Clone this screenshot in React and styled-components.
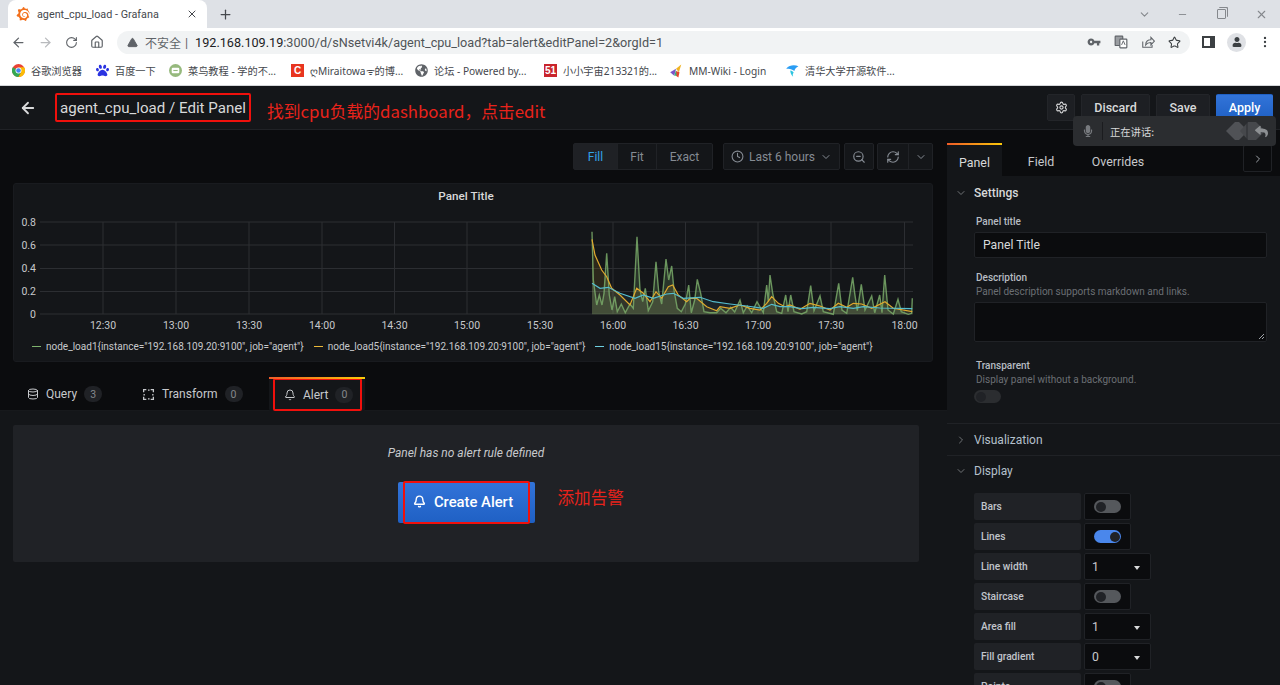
import React from "react"
import styled, {createGlobalStyle} from "styled-components"
import {ArrowLeft, ArrowRight, RotateCw, Home, Star, MoreVertical, Plus, X, Minus, ChevronDown, ChevronRight, Settings, Clock, ZoomOut, RefreshCw, Database, Bell, TriangleAlert} from "lucide-react"
import {FaUser, FaMicrophone, FaReply, FaPaw, FaGlobeAmericas} from "react-icons/fa"
import {MdVpnKey} from "react-icons/md"
import {SiGrafana} from "react-icons/si"

const ROBOTO = `Roboto, "Noto Sans CJK SC", sans-serif`
const CJK = `"Noto Sans CJK SC", Roboto, sans-serif`

const GlobalStyle = createGlobalStyle`
    html, body {
        margin: 0;
        padding: 0;
        background: #141619;
        overflow: hidden;
    }
    * { box-sizing: border-box; }
`

const Page = styled.div`
    width: 1280px;
    height: 685px;
    position: relative;
    overflow: hidden;
    display: flex;
    flex-direction: column;
    font-family: ${ROBOTO};
`

/* browser chrome */
const TabStrip = styled.div`
    height: 28px;
    background: #dee1e6;
    display: flex;
    align-items: flex-end;
    padding-left: 8px;
    flex: none;
`
const BrowserTab = styled.div`
    width: 199px;
    height: 28px;
    background: #fff;
    border-radius: 8px 8px 0 0;
    display: flex;
    align-items: center;
    padding: 0 9px 0 8px;
    color: #45484d;
    font-size: 10.8px;
    svg:first-child { color: #f2701d; margin-right: 7px; }
    span { flex: 1; }
`
const NewTab = styled.div`
    width: 36px;
    height: 28px;
    display: flex;
    align-items: center;
    justify-content: center;
    color: #45484d;
`
const WindowControls = styled.div`
    margin-left: auto;
    height: 28px;
    display: flex;
    align-items: center;
    gap: 29px;
    padding-right: 12px;
    color: #85888d;
    svg:first-child { margin-right: -3px; }
`
const RestoreIcon = styled.div`
    width: 9px;
    height: 10px;
    border: 1px solid #85888d;
    border-radius: 1px;
    box-shadow: 1px -1px 0 0 #dee1e6, 2px -2px 0 0 #85888d;
`
const NavBar = styled.div`
    height: 28px;
    background: #fff;
    display: flex;
    align-items: center;
    padding-left: 11px;
    flex: none;
    color: #5f6368;
`
const NavButtons = styled.div`
    display: flex;
    align-items: center;
    gap: 12px;
    width: 106px;
    flex: none;
`
const Omnibox = styled.div`
    width: 1073px;
    height: 23px;
    border-radius: 12px;
    background: #f1f3f4;
    display: flex;
    align-items: center;
    padding: 0 9px 0 10px;
    font-size: 12.65px;
    color: #5f6368;
`
const Insecure = styled.span`
    font-family: ${CJK};
    font-size: 12px;
    color: #5f6368;
    margin-left: 7px;
    padding-right: 4px;
`
const Divider = styled.span`
    color: #5f6368;
    margin-right: 7px;
`
const UrlHost = styled.span`
    color: #202124;
`
const UrlPath = styled.span`
    color: #4f5357;
`
const OmniIcons = styled.div`
    margin-left: auto;
    display: flex;
    align-items: center;
    gap: 13px;
    color: #5f6368;
`
const NavTail = styled.div`
    flex: 1;
    display: flex;
    align-items: center;
    gap: 12px;
    padding-left: 12px;
    color: #3c4043;
`
const SidePanelIcon = styled.div`
    width: 13px;
    height: 12px;
    border: 2px solid #3c4043;
    border-right-width: 5px;
    flex: none;
`
const Avatar = styled.div`
    width: 19px;
    height: 19px;
    border-radius: 50%;
    background: #dfe1e5;
    color: #3c4043;
    display: flex;
    align-items: center;
    justify-content: center;
    flex: none;
`
const BookmarkBar = styled.div`
    height: 30px;
    background: #fff;
    display: flex;
    align-items: center;
    padding-left: 12px;
    gap: 13px;
    flex: none;
    border-bottom: 1px solid #d4d6d9;
`
const Bookmark = styled.div`
    display: flex;
    align-items: center;
    gap: 6px;
    font-size: 10.2px;
    color: #45484d;
    white-space: nowrap;
    font-family: "Noto Sans", "Noto Sans CJK SC", sans-serif;
    width: ${({$w}) => $w}px;
    flex: none;
    svg { flex: none; }
`
const SquareBadge = styled.div`
    width: 13px;
    height: 13px;
    background: ${({$bg}) => $bg};
    color: #fff;
    font: bold 10px "Liberation Sans", sans-serif;
    display: flex;
    align-items: center;
    justify-content: center;
    flex: none;
`

/* grafana top bar */
const TopBar = styled.div`
    height: 44px;
    background: #141619;
    border-bottom: 1px solid #202226;
    display: flex;
    align-items: center;
    flex: none;
    padding-left: 19px;
    color: #d8d9da;
`
const TitleBox = styled.div`
    margin-left: 18px;
    height: 29px;
    width: 196px;
    border: 2px solid #f0100c;
    border-radius: 2px;
    font-size: 15.1px;
    color: #d8d9da;
    display: flex;
    align-items: center;
    padding-left: 3px;
    white-space: nowrap;
`
const Note = styled.span`
    color: #e8231b;
    font-family: ${CJK};
    font-size: ${({$size}) => $size}px;
    white-space: nowrap;
`
const TitleNote = styled(Note)`
    margin: 7px 0 0 16px;
`
const TopActions = styled.div`
    margin-left: auto;
    display: flex;
    gap: 6px;
    padding-right: 7px;
    align-items: center;
`
const TopButton = styled.div`
    height: 27px;
    width: ${({$w}) => $w}px;
    border-radius: 2px;
    background: ${({$primary}) => $primary ? "linear-gradient(#3274d9, #1f60c4)" : "#1d1f23"};
    color: ${({$primary}) => $primary ? "#fff" : "#d8d9da"};
    border: 1px solid ${({$primary}) => $primary ? "transparent" : "#232529"};
    display: flex;
    align-items: center;
    justify-content: center;
    font-size: 12.5px;
    font-weight: 500;
`

/* floating speech hint over the header */
const SpeechHint = styled.div`
    position: absolute;
    left: 1073px;
    top: 116px;
    width: 203px;
    height: 30px;
    border-radius: 4px;
    background: #2b2d30;
    display: flex;
    align-items: center;
    color: #d8d9da;
    font-family: ${CJK};
    font-size: 10.3px;
`
const HintMic = styled.div`
    width: 30px;
    height: 18px;
    border-right: 1px solid #1b1c1f;
    display: flex;
    align-items: center;
    justify-content: center;
    color: #777a7e;
    margin-right: 7px;
`
const HintTail = styled.div`
    margin-left: auto;
    position: relative;
    display: flex;
    align-items: center;
    padding-right: 8px;
    color: #8d9093;
    svg:last-child { margin-left: -11px; }
`

/* main split */
const Workspace = styled.div`
    flex: 1;
    display: flex;
    min-height: 0;
`
const EditorColumn = styled.div`
    width: 947px;
    flex: none;
    display: flex;
    flex-direction: column;
    background: #0b0c0e;
`
const Toolbar = styled.div`
    height: 53px;
    padding: 13px 14px 0 0;
    display: flex;
    justify-content: flex-end;
    flex: none;
    gap: 3px;
    color: #9fa3a8;
`
const ButtonGroup = styled.div`
    height: 27px;
    display: flex;
    border: 1px solid #202226;
    border-radius: 2px;
    background: #141619;
    margin-right: ${({$gap}) => $gap || 0}px;
`
const ToolCell = styled.div`
    width: ${({$w}) => $w}px;
    display: flex;
    align-items: center;
    justify-content: center;
    gap: 5px;
    font-size: 12px;
    color: ${({$active}) => $active ? "#33a2e5" : "#858b93"};
    background: ${({$active}) => $active ? "#1f2125" : "transparent"};
    & + & { border-left: 1px solid #202226; }
`
const PanelCard = styled.div`
    margin: 0 14px 0 13px;
    height: 179px;
    background: #141619;
    border: 1px solid #191b1f;
    border-radius: 3px;
    flex: none;
    display: flex;
    flex-direction: column;
`
const PanelHeading = styled.div`
    height: 24px;
    display: flex;
    align-items: center;
    justify-content: center;
    font-size: 11.7px;
    font-weight: 500;
    color: #d8d9da;
    flex: none;
    padding: 0 14px 0 0;
`
const ChartSvg = styled.svg`
    display: block;
    flex: none;
    margin-left: -1px;
    text {
        font-family: ${ROBOTO};
        font-size: 10.5px;
        fill: #c7c9cc;
    }
`
const Legend = styled.div`
    display: flex;
    gap: 10px;
    padding: 5px 0 0 18px;
    font-size: 10px;
    color: #c7c9cc;
    white-space: nowrap;
`
const LegendItem = styled.div`
    display: flex;
    align-items: center;
    gap: 5px;
    &::before {
        content: "";
        width: 9px;
        height: 1.5px;
        background: ${({$color}) => $color};
    }
`
const QueryTabs = styled.div`
    margin-top: 15px;
    height: 34px;
    display: flex;
    padding-left: 27px;
    flex: none;
    border-bottom: 1px solid #17191c;
`
const QueryTab = styled.div`
    height: 34px;
    display: flex;
    align-items: center;
    gap: 7px;
    color: #c7c9cc;
    font-size: 12px;
    width: ${({$w}) => $w}px;
    flex: none;
`
const AlertTab = styled(QueryTab)`
    position: relative;
    background: #141619;
    border: 2px solid #f0100c;
    border-radius: 2px;
    padding-left: 9px;
    margin: 1px 0 0 1px;
    height: 33px;
    box-shadow: -4px 0 0 #141619, 3px 0 0 #141619;
    &::before {
        content: "";
        position: absolute;
        left: -6px;
        right: -5px;
        top: -3px;
        height: 2px;
        background: linear-gradient(90deg, #f05a28, #fbca0a);
    }
`
const Count = styled.span`
    min-width: 18px;
    height: 16px;
    border-radius: 8px;
    background: #202226;
    color: #85888c;
    font-size: 10.5px;
    display: flex;
    align-items: center;
    justify-content: center;
`
const AlertArea = styled.div`
    flex: 1;
    background: #141619;
    padding: 14px 28px 0 13px;
`
const EmptyPanel = styled.div`
    height: 137px;
    background: #202226;
    border-radius: 2px;
    display: flex;
    flex-direction: column;
    align-items: center;
    padding-top: 21px;
`
const EmptyText = styled.div`
    font-size: 12px;
    font-style: italic;
    color: #c7c9cc;
`
const CreateRow = styled.div`
    margin-top: 22px;
    position: relative;
    width: 137px;
`
const CreateButton = styled.div`
    height: 41px;
    border-radius: 2px;
    background: linear-gradient(#3274d9, #1f60c4);
    color: #fff;
    font-size: 14.8px;
    font-weight: 500;
    display: flex;
    align-items: center;
    justify-content: center;
    gap: 8px;
    padding: 0 6px 2px 0;
`
const RedFrame = styled.div`
    position: absolute;
    left: 5px;
    right: 5px;
    top: -1px;
    bottom: -1px;
    border: 2px solid #f0100c;
    border-radius: 2px;
`
const CreateNote = styled(Note)`
    position: absolute;
    left: 160px;
    top: 3px;
    line-height: 24px;
`

/* options pane */
const OptionsColumn = styled.div`
    flex: 1;
    min-width: 0;
    display: flex;
    flex-direction: column;
    background: linear-gradient(#0b0c0e 46px, #141619 46px);
`
const PaneTabs = styled.div`
    height: 46px;
    padding-top: 13px;
    display: flex;
    flex: none;
    border-bottom: 1px solid #0b0c0e;
    position: relative;
`
const PaneTab = styled.div`
    width: ${({$w}) => $w}px;
    display: flex;
    align-items: center;
    justify-content: center;
    font-size: 12.4px;
    color: #c7c9cc;
    padding-top: 3px;
    height: 33px;
    flex: none;
`
const ActivePaneTab = styled(PaneTab)`
    color: #d8d9da;
    background: #141619;
    border-top: 2px solid;
    border-image: linear-gradient(90deg, #f05a28, #fbca0a) 1;
`
const CollapseButton = styled.div`
    margin: 2px 8px 0 auto;
    width: 29px;
    height: 27px;
    border: 1px solid #202226;
    border-radius: 2px;
    display: flex;
    align-items: center;
    justify-content: center;
    color: #9fa3a8;
`
const Section = styled.div`
    border-bottom: 1px solid ${({$last}) => $last ? "transparent" : "#202226"};
    flex: none;
`
const SectionHead = styled.div`
    height: ${({$h}) => $h}px;
    display: flex;
    align-items: center;
    padding-left: 8px;
    gap: 7px;
    color: ${({$muted}) => $muted ? "#b4c0cc" : "#d8d9da"};
    font-size: 12px;
    font-weight: ${({$muted}) => $muted ? 400 : 500};
    svg { color: #6f7275; }
`
const SectionBody = styled.div`
    padding: ${({$pad}) => $pad};
`
const FieldLabel = styled.div`
    font-size: 10px;
    font-weight: 500;
    color: #b7bcc2;
    line-height: 14px;
    padding-left: 2px;
`
const FieldHint = styled.div`
    font-size: 10px;
    color: #6b6f74;
    line-height: 14px;
    padding-left: 2px;
`
const TextInput = styled.div`
    height: 26px;
    margin: 3px 0 13px;
    background: #0b0c0e;
    border: 1px solid #202226;
    border-radius: 2px;
    font-size: 12.2px;
    color: #d8d9da;
    display: flex;
    align-items: center;
    padding-left: 8px;
`
const TextArea = styled.div`
    height: 40px;
    margin: 3px 0 17px;
    background: #0b0c0e;
    border: 1px solid #202226;
    border-radius: 2px;
    position: relative;
    svg { position: absolute; right: 1px; bottom: 1px; }
`
const Toggle = styled.div`
    width: 27px;
    height: 13px;
    border-radius: 7px;
    background: ${({$on, $dim}) => $on ? "#4a87ec" : $dim ? "#2b2d30" : "#55585c"};
    position: relative;
    flex: none;
    &::after {
        content: "";
        position: absolute;
        top: 1.5px;
        left: ${({$on}) => $on ? "15.5px" : "1.5px"};
        width: 10px;
        height: 10px;
        border-radius: 50%;
        background: #202226;
    }
`
const TransparentToggle = styled.div`
    margin: 3px 0 20px;
`
const OptionRow = styled.div`
    display: flex;
    gap: 3px;
    height: 27px;
    margin-bottom: 3px;
`
const OptionLabel = styled.div`
    width: 107px;
    flex: none;
    background: #202226;
    border-radius: 2px;
    font-size: 10.2px;
    font-weight: 500;
    color: #c0c5cb;
    display: flex;
    align-items: center;
    padding-left: 7px;
`
const OptionBox = styled.div`
    width: ${({$wide}) => $wide ? 67 : 47}px;
    flex: none;
    background: #0b0c0e;
    border: 1px solid #202226;
    border-radius: 2px;
    display: flex;
    align-items: center;
    font-size: 12.2px;
    color: #c7c9cc;
    padding: ${({$wide}) => $wide ? "0 10px 0 7px" : "0 0 0 9px"};
    justify-content: space-between;
`
const Caret = styled.span`
    width: 0;
    height: 0;
    border-left: 3.5px solid transparent;
    border-right: 3.5px solid transparent;
    border-top: 4px solid #d8d9da;
    margin-top: 2px;
`

const toPts = (arr) => arr.map(([x, y]) => `${(480 + x / 3).toFixed(1)},${(180 + y / 3).toFixed(1)}`).join(" ")

const GREEN = [[336,155],[340,300],[350,375],[358,345],[366,375],[372,340],[380,220],[388,345],[396,390],[404,350],[412,395],[424,372],[436,398],[450,372],[460,385],[471,170],[480,330],[488,365],[496,325],[505,392],[518,365],[528,245],[536,335],[545,372],[558,237],[566,300],[575,258],[582,330],[592,385],[604,395],[616,372],[626,315],[634,398],[644,360],[652,298],[662,340],[672,395],[690,398],[710,398],[722,385],[738,398],[752,382],[764,396],[780,360],[790,398],[802,378],[815,398],[831,365],[850,398],[860,315],[865,365],[870,285],[878,340],[890,395],[905,400],[917,345],[924,395],[932,345],[942,395],[965,402],[980,395],[992,317],[1002,392],[1020,348],[1030,395],[1060,403],[1076,310],[1086,390],[1100,400],[1118,292],[1124,340],[1132,392],[1144,313],[1155,390],[1175,348],[1184,398],[1199,345],[1206,398],[1214,285],[1224,390],[1240,402],[1254,358],[1264,395],[1285,403],[1295,400],[1297,355]]
const YELLOW = [[336,178],[345,225],[365,270],[380,290],[395,325],[420,345],[450,375],[470,325],[490,340],[510,365],[528,335],[545,355],[565,320],[578,315],[595,345],[620,365],[630,355],[650,355],[680,380],[710,392],[720,380],[750,385],[780,375],[810,385],[840,390],[860,370],[875,350],[895,370],[915,380],[930,375],[960,388],[990,370],[1020,378],[1050,390],[1075,370],[1100,382],[1120,370],[1145,372],[1175,385],[1215,365],[1240,385],[1297,395]]
const BLUE = [[336,310],[360,325],[385,322],[420,340],[465,355],[490,345],[520,355],[560,342],[580,340],[610,355],[660,352],[700,365],[750,372],[800,378],[850,385],[875,373],[900,380],[930,380],[965,386],[1000,382],[1050,386],[1080,380],[1120,385],[1150,380],[1200,384],[1297,386]]

const Y_AXIS = [["0.8", 222], ["0.6", 245], ["0.4", 268.5], ["0.2", 291.5], ["0", 314]]
const X_AXIS = [["12:30", 103], ["13:00", 176], ["13:30", 249], ["14:00", 322], ["14:30", 394.5], ["15:00", 467], ["15:30", 540], ["16:00", 613], ["16:30", 685.5], ["17:00", 758], ["17:30", 831], ["18:00", 904.5]]

const LoadChart = () => {
    const base = [[1297, 403], [336, 403]]
    return (
        <ChartSvg width="920" height="128" viewBox="13 208 920 128">
            {Y_AXIS.map(([label, y]) => (
                <g key={label}>
                    <line x1="40" x2="913" y1={y} y2={y} stroke="#2c2e32"/>
                    <text x="36" y={y + 3.5} textAnchor="end">{label}</text>
                </g>
            ))}
            {X_AXIS.map(([label, x]) => (
                <g key={label}>
                    <line x1={x} x2={x} y1="222" y2="314" stroke="#2c2e32"/>
                    <text x={x} y="329" textAnchor="middle">{label}</text>
                </g>
            ))}
            <polygon points={toPts([...GREEN, ...base])} fill="#7eb26d" fillOpacity=".2"/>
            <polygon points={toPts([...YELLOW, ...base])} fill="#e0a92e" fillOpacity=".12"/>
            <polygon points={toPts([...BLUE, ...base])} fill="#6ed0e0" fillOpacity=".08"/>
            <polyline points={toPts(GREEN)} fill="none" stroke="#7eb26d" strokeWidth="1.4" strokeOpacity=".8"/>
            <polyline points={toPts(YELLOW)} fill="none" stroke="#e0a92e" strokeWidth="1.2"/>
            <polyline points={toPts(BLUE)} fill="none" stroke="#55bccd" strokeWidth="1.2"/>
        </ChartSvg>
    )
}

const ChromeLogo = () => (
    <svg width="13" height="13" viewBox="0 0 24 24">
        <circle cx="12" cy="12" r="12" fill="#ea4335"/>
        <path d="M12 12 1.6 6A12 12 0 0 0 12 24l5-9z" fill="#34a853"/>
        <path d="M12 6h10.4A12 12 0 0 1 12 24l5-9z" fill="#fbbc05"/>
        <circle cx="12" cy="12" r="5.5" fill="#fff"/>
        <circle cx="12" cy="12" r="4.2" fill="#4285f4"/>
    </svg>
)

const RunoobLogo = () => (
    <svg width="13" height="13" viewBox="0 0 24 24">
        <circle cx="12" cy="12" r="12" fill="#96b97d"/>
        <rect x="5" y="7" width="14" height="10" rx="2" fill="#fff"/>
        <rect x="8" y="11" width="8" height="2" fill="#96b97d"/>
    </svg>
)

const WikiLogo = () => (
    <svg width="14" height="14" viewBox="0 0 24 24">
        <path d="M2 14 12 8 9 20z" fill="#7b54c9"/>
        <path d="M12 8 21 1 17 14z" fill="#f0b323"/>
        <path d="M12 12 18 14 16 23 12 20z" fill="#e8452c"/>
        <path d="M9 20 12 10 13 20z" fill="#37b37e"/>
    </svg>
)

const TsinghuaLogo = () => (
    <svg width="14" height="14" viewBox="0 0 24 24">
        <path d="M2 8C8 1 17 1 23 4 19 6 17 9 16 12 13 9 8 8 2 8z" fill="#2a9df4"/>
        <path d="M9 11c3 0 5 2 6 4-2 1-2 4-1 7-3-3-5-7-5-11z" fill="#2ec5e0"/>
    </svg>
)

const TransformIcon = () => (
    <svg width="13" height="13" viewBox="0 0 24 24" fill="none" stroke="#c7c9cc" strokeWidth="2.4">
        <path d="M3 8V3h5M16 3h5v5M21 16v5h-5M8 21H3v-5"/>
        <path d="M11 4h3M20 11v3M4 11v3M11 20h3"/>
    </svg>
)

const TranslateIcon = () => (
    <svg width="14" height="14" viewBox="0 0 24 24" fill="none" stroke="#5f6368" strokeWidth="2">
        <rect x="2" y="2" width="13" height="16" rx="1" fill="#9a9da1"/>
        <rect x="10" y="7" width="12" height="15" rx="1" fill="#fff"/>
        <path d="M13 17l3-7 3 7" strokeWidth="1.6"/>
    </svg>
)

const ShareIcon = () => (
    <svg width="14" height="14" viewBox="0 0 24 24" fill="none" stroke="#5f6368" strokeWidth="1.8">
        <path d="M3 11v10h16v-4"/>
        <path d="M8 17c0-6 4-9 9-9V4l6 6.5-6 6.5v-4c-4 0-7 1-9 4z"/>
    </svg>
)

const HintMark = () => (
    <svg width="40" height="20" viewBox="0 0 40 20">
        <path d="M0 10 9 1 13 1 22 10 13 19 9 19z" fill="#505256"/>
        <path d="M14 10 22 1 30 1 39 10 30 19 22 19z" fill="#46484c"/>
        <path d="M21 0v20" stroke="#2b2d30"/>
    </svg>
)

const BOOKMARKS = [
    {icon: <ChromeLogo/>, text: "谷歌浏览器", w: 71},
    {icon: <FaPaw size={13} color="#2932e1"/>, text: "百度一下", w: 60},
    {icon: <RunoobLogo/>, text: "菜鸟教程 - 学的不...", w: 109},
    {icon: <SquareBadge $bg="#e8351f">C</SquareBadge>, text: "ღMiraitowaᯤ的博...", w: 111},
    {icon: <FaGlobeAmericas size={13} color="#5f6368"/>, text: "论坛 - Powered by...", w: 116},
    {icon: <SquareBadge $bg="#c9242c">51</SquareBadge>, text: "小小宇宙213321的...", w: 112},
    {icon: <WikiLogo/>, text: "MM-Wiki - Login", w: 103},
    {icon: <TsinghuaLogo/>, text: "清华大学开源软件...", w: 110},
]

const DISPLAY_ROWS = [
    {label: "Bars", toggle: false},
    {label: "Lines", toggle: true},
    {label: "Line width", value: "1"},
    {label: "Staircase", toggle: false},
    {label: "Area fill", value: "1"},
    {label: "Fill gradient", value: "0"},
    {label: "Points", toggle: false},
]

const OptionControl = ({row}) => {
    if (row.value !== undefined) {
        return <OptionBox $wide>{row.value}<Caret/></OptionBox>
    }
    return <OptionBox><Toggle $on={row.toggle}/></OptionBox>
}

const App = () => {
    return (
        <Page>
            <GlobalStyle/>
            <TabStrip>
                <BrowserTab>
                    <SiGrafana size={14}/>
                    <span>agent_cpu_load - Grafana</span>
                    <X size={12} color="#45484d"/>
                </BrowserTab>
                <NewTab><Plus size={15}/></NewTab>
                <WindowControls>
                    <ChevronDown size={13}/>
                    <Minus size={11}/>
                    <RestoreIcon/>
                    <X size={13}/>
                </WindowControls>
            </TabStrip>
            <NavBar>
                <NavButtons>
                    <ArrowLeft size={15}/>
                    <ArrowRight size={15} color="#b8babd"/>
                    <RotateCw size={13}/>
                    <Home size={14}/>
                </NavButtons>
                <Omnibox>
                    <TriangleAlert size={11} fill="#5f6368" color="#5f6368"/>
                    <Insecure>不安全</Insecure>
                    <Divider>|</Divider>
                    <UrlHost>192.168.109.19</UrlHost>
                    <UrlPath>:3000/d/sNsetvi4k/agent_cpu_load?tab=alert&amp;editPanel=2&amp;orgId=1</UrlPath>
                    <OmniIcons>
                        <MdVpnKey size={14}/>
                        <TranslateIcon/>
                        <ShareIcon/>
                        <Star size={13} color="#3c4043"/>
                    </OmniIcons>
                </Omnibox>
                <NavTail>
                    <SidePanelIcon/>
                    <Avatar><FaUser size={10}/></Avatar>
                    <MoreVertical size={14}/>
                </NavTail>
            </NavBar>
            <BookmarkBar>
                {BOOKMARKS.map((b) => (
                    <Bookmark key={b.text} $w={b.w}>{b.icon}<span>{b.text}</span></Bookmark>
                ))}
            </BookmarkBar>

            <TopBar>
                <ArrowLeft size={18} strokeWidth={2.4}/>
                <TitleBox>agent_cpu_load / Edit Panel</TitleBox>
                <TitleNote $size={16.8}>找到cpu负载的dashboard，点击edit</TitleNote>
                <TopActions>
                    <TopButton $w={28}><Settings size={13}/></TopButton>
                    <TopButton $w={69}>Discard</TopButton>
                    <TopButton $w={54}>Save</TopButton>
                    <TopButton $w={57} $primary>Apply</TopButton>
                </TopActions>
            </TopBar>

            <Workspace>
                <EditorColumn>
                    <Toolbar>
                        <ButtonGroup $gap={7}>
                            <ToolCell $w={43} $active>Fill</ToolCell>
                            <ToolCell $w={39}>Fit</ToolCell>
                            <ToolCell $w={56}>Exact</ToolCell>
                        </ButtonGroup>
                        <ButtonGroup $gap={1}>
                            <ToolCell $w={115}><Clock size={13}/>Last 6 hours<ChevronDown size={12}/></ToolCell>
                        </ButtonGroup>
                        <ButtonGroup>
                            <ToolCell $w={28}><ZoomOut size={14}/></ToolCell>
                        </ButtonGroup>
                        <ButtonGroup>
                            <ToolCell $w={30}><RefreshCw size={14}/></ToolCell>
                            <ToolCell $w={24}><ChevronDown size={12}/></ToolCell>
                        </ButtonGroup>
                    </Toolbar>
                    <PanelCard>
                        <PanelHeading>Panel Title</PanelHeading>
                        <LoadChart/>
                        <Legend>
                            <LegendItem $color="#7eb26d">node_load1{'{'}instance="192.168.109.20:9100", job="agent"{'}'}</LegendItem>
                            <LegendItem $color="#eab839">node_load5{'{'}instance="192.168.109.20:9100", job="agent"{'}'}</LegendItem>
                            <LegendItem $color="#6ed0e0">node_load15{'{'}instance="192.168.109.20:9100", job="agent"{'}'}</LegendItem>
                        </Legend>
                    </PanelCard>
                    <QueryTabs>
                        <QueryTab $w={115}><Database size={12}/>Query<Count>3</Count></QueryTab>
                        <QueryTab $w={130}><TransformIcon/>Transform<Count>0</Count></QueryTab>
                        <AlertTab $w={89}><Bell size={12}/>Alert<Count>0</Count></AlertTab>
                    </QueryTabs>
                    <AlertArea>
                        <EmptyPanel>
                            <EmptyText>Panel has no alert rule defined</EmptyText>
                            <CreateRow>
                                <CreateButton><Bell size={13} strokeWidth={2.6}/>Create Alert</CreateButton>
                                <RedFrame/>
                                <CreateNote $size={16.6}>添加告警</CreateNote>
                            </CreateRow>
                        </EmptyPanel>
                    </AlertArea>
                </EditorColumn>

                <OptionsColumn>
                    <PaneTabs>
                        <ActivePaneTab $w={55}>Panel</ActivePaneTab>
                        <PaneTab $w={78}>Field</PaneTab>
                        <PaneTab $w={76}>Overrides</PaneTab>
                        <CollapseButton><ChevronRight size={12}/></CollapseButton>
                    </PaneTabs>
                    <Section>
                        <SectionHead $h={34}><ChevronDown size={12}/>Settings</SectionHead>
                        <SectionBody $pad="5px 13px 0 27px">
                            <FieldLabel>Panel title</FieldLabel>
                            <TextInput>Panel Title</TextInput>
                            <FieldLabel>Description</FieldLabel>
                            <FieldHint>Panel description supports markdown and links.</FieldHint>
                            <TextArea>
                                <svg width="7" height="7" viewBox="0 0 7 7" stroke="#9fa3a8"><path d="M1 6 6 1M4 6 6 4"/></svg>
                            </TextArea>
                            <FieldLabel>Transparent</FieldLabel>
                            <FieldHint>Display panel without a background.</FieldHint>
                            <TransparentToggle><Toggle $dim/></TransparentToggle>
                        </SectionBody>
                    </Section>
                    <Section>
                        <SectionHead $h={31} $muted><ChevronRight size={12}/>Visualization</SectionHead>
                    </Section>
                    <Section $last>
                        <SectionHead $h={30} $muted><ChevronDown size={12}/>Display</SectionHead>
                        <SectionBody $pad="7px 13px 0 27px">
                            {DISPLAY_ROWS.map((row) => (
                                <OptionRow key={row.label}>
                                    <OptionLabel>{row.label}</OptionLabel>
                                    <OptionControl row={row}/>
                                </OptionRow>
                            ))}
                        </SectionBody>
                    </Section>
                </OptionsColumn>
            </Workspace>

            <SpeechHint>
                <HintMic><FaMicrophone size={12}/></HintMic>
                正在讲话:
                <HintTail>
                    <HintMark/>
                    <FaReply size={13}/>
                </HintTail>
            </SpeechHint>
        </Page>
    )
}

export default App
